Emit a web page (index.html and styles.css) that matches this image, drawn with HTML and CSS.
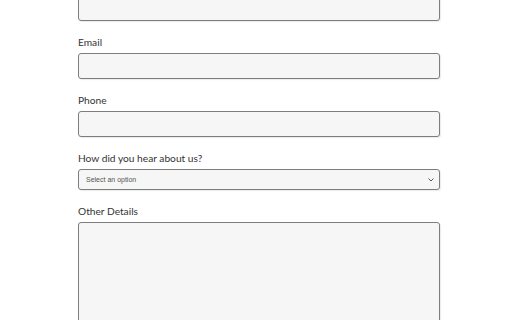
FILE: index.html
```html
<!DOCTYPE html>
<html>
<head>
<meta charset="utf-8">
<link rel="stylesheet" href="styles.css">
</head>
<body>
<form class="form">
  <div class="field">
    <div class="input"></div>
  </div>
  <div class="field">
    <label class="label">Email</label>
    <div class="input"></div>
  </div>
  <div class="field">
    <label class="label">Phone</label>
    <div class="input"></div>
  </div>
  <div class="field">
    <label class="label">How did you hear about us?</label>
    <div class="select">
      <span class="select-text">Select an option</span>
      <svg class="chev" width="6" height="4" viewBox="0 0 6 4"><path d="M0.5 0.5 L3 3 L5.5 0.5" fill="none" stroke="#555" stroke-width="1"/></svg>
    </div>
  </div>
  <div class="field">
    <label class="label">Other Details</label>
    <div class="textarea"></div>
  </div>
</form>
</body>
</html>
```
FILE: styles.css
```css
html, body {
  margin: 0;
  padding: 0;
  background: #ffffff;
  overflow: hidden;
}
.form {
  margin: -5px 0 0 78px;
  width: 362px;
  display: flex;
  flex-direction: column;
  gap: 11px;
  font-family: Lato, "Open Sans", sans-serif;
}
.field {
  display: flex;
  flex-direction: column;
  gap: 1px;
}
.label {
  display: block;
  font-size: 10.2px;
  line-height: 20px;
  color: #333;
}
.input, .select, .textarea {
  box-sizing: border-box;
  border: 1px solid #7d7d7d;
  border-radius: 3px;
  background: #f6f6f6;
  box-shadow: 1px 1px 1px rgba(0,0,0,0.08);
}
.input {
  height: 26px;
}
.select {
  height: 21px;
  display: flex;
  align-items: center;
  justify-content: space-between;
  padding: 0 5px 0 7px;
}
.select-text {
  font-family: "Liberation Sans", Arial, sans-serif;
  font-size: 7px;
  color: #555;
}
.textarea {
  height: 150px;
}
```
